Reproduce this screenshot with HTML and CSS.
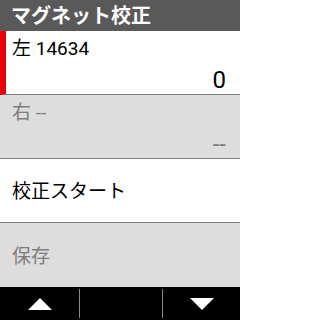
FILE: index.html
```html
<!DOCTYPE html>
<html lang="ja">
<head>
<meta charset="utf-8">
<link rel="stylesheet" href="styles.css">
</head>
<body>
<div class="screen">
  <div class="header">マグネット校正</div>
  <div class="row row-active">
    <div class="label">左 14634</div>
    <div class="value">0</div>
  </div>
  <div class="row row-disabled">
    <div class="label">右 --</div>
    <div class="value">--</div>
  </div>
  <div class="row row-single">
    <div class="label">校正スタート</div>
  </div>
  <div class="row row-single row-disabled row-last">
    <div class="label">保存</div>
  </div>
  <div class="footer">
    <div class="cell cell-left">
      <svg width="24" height="12" viewBox="0 0 24 12"><polygon points="12,0 24,12 0,12" fill="#fff"/></svg>
    </div>
    <div class="divider"></div>
    <div class="cell cell-mid"></div>
    <div class="divider"></div>
    <div class="cell cell-right">
      <svg width="24" height="12" viewBox="0 0 24 12"><polygon points="0,0 24,0 12,12" fill="#fff"/></svg>
    </div>
  </div>
</div>
</body>
</html>
```
FILE: styles.css
```css
html, body {
  margin: 0;
  padding: 0;
  background: #fff;
}
.screen {
  width: 240px;
  height: 320px;
  display: flex;
  flex-direction: column;
  font-family: "Roboto", "Noto Sans CJK JP", sans-serif;
  overflow: hidden;
}
.header {
  height: 31px;
  background: #595959;
  color: #fff;
  font-size: 20px;
  font-weight: 700;
  line-height: 32px;
  padding-left: 11px;
  white-space: nowrap;
}
.row {
  height: 63px;
  border-bottom: 1px solid #7a7a7a;
  background: #fff;
  color: #000;
  display: flex;
  flex-direction: column;
  padding: 0 14px 0 12px;
}
.row-active {
  border-left: 6px solid #e8000b;
  padding-left: 6px;
}
.row-disabled {
  background: #dddddd;
  color: #7d7d7d;
}
.row-last {
  border-bottom: none;
  height: 64px;
}
.label {
  font-size: 19px;
  line-height: 22px;
  margin-top: 7px;
  white-space: nowrap;
}
.value {
  margin-top: auto;
  text-align: right;
  font-size: 24px;
  line-height: 28px;
  padding-bottom: 0;
}
.row-single {
  justify-content: center;
}
.row-single .label {
  margin-top: 3px;
}
.footer {
  height: 33px;
  background: #000;
  display: flex;
  align-items: stretch;
}
.cell {
  display: flex;
  align-items: center;
  justify-content: center;
}
.cell-left { width: 79px; }
.cell-mid { width: 82px; }
.cell-right { flex: 1; }
.divider {
  width: 1px;
  background: #8a8a8a;
  margin: 2px 0;
}
```
